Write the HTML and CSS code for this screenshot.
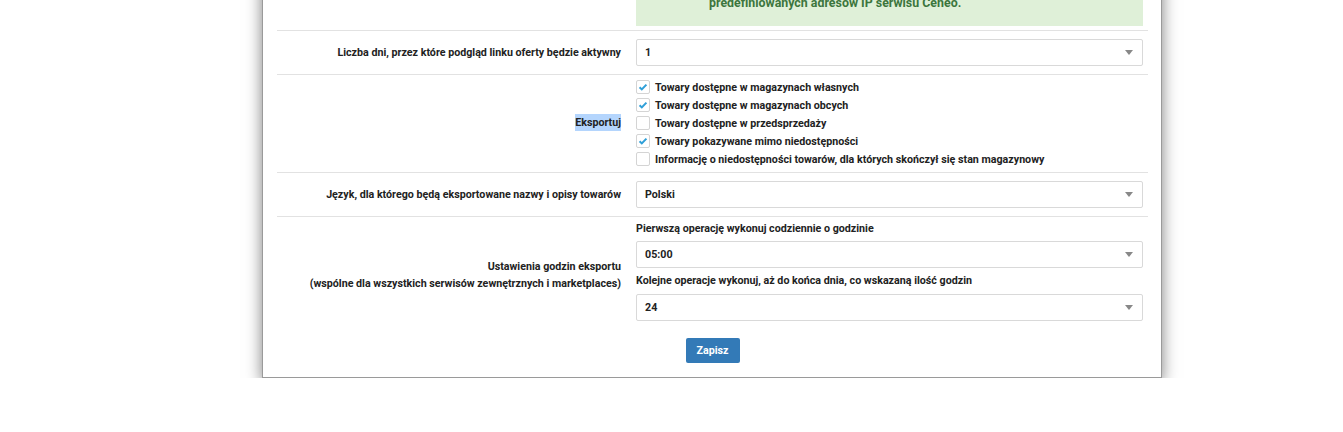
FILE: index.html
```html
<!DOCTYPE html>
<html lang="pl">
<head>
    <meta charset="UTF-8">
    <meta name="viewport" content="width=device-width, initial-scale=1.0">
    <title>Ustawienia eksportu</title>
    <link rel="stylesheet" href="styles.css">
</head>
<body>
    <div class="modal">
        <div class="form-row no-border">
            <div class="form-label"></div>
            <div class="form-control">
                <div class="alert">
                    Eksport jest dostępny wyłącznie dla zapytań wysyłanych z<br>
                    predefiniowanych adresów IP serwisu Ceneo.
                </div>
            </div>
        </div>

        <div class="form-row">
            <div class="form-label">Liczba dni, przez które podgląd linku oferty będzie aktywny</div>
            <div class="form-control">
                <div class="select"><span>1</span><i class="caret"></i></div>
            </div>
        </div>

        <div class="form-row checks-row">
            <div class="form-label"><span class="selected">Eksportuj</span></div>
            <div class="form-control">
                <label class="check"><span class="box checked"><svg viewBox="0 0 14 14" width="14" height="14"><path d="M3 7.2l2.6 2.6L11 4.2" fill="none" stroke="#2f9fd8" stroke-width="2.4"/></svg></span>Towary dostępne w magazynach własnych</label>
                <label class="check"><span class="box checked"><svg viewBox="0 0 14 14" width="14" height="14"><path d="M3 7.2l2.6 2.6L11 4.2" fill="none" stroke="#2f9fd8" stroke-width="2.4"/></svg></span>Towary dostępne w magazynach obcych</label>
                <label class="check"><span class="box"></span>Towary dostępne w przedsprzedaży</label>
                <label class="check"><span class="box checked"><svg viewBox="0 0 14 14" width="14" height="14"><path d="M3 7.2l2.6 2.6L11 4.2" fill="none" stroke="#2f9fd8" stroke-width="2.4"/></svg></span>Towary pokazywane mimo niedostępności</label>
                <label class="check"><span class="box"></span>Informację o niedostępności towarów, dla których skończył się stan magazynowy</label>
            </div>
        </div>

        <div class="form-row">
            <div class="form-label">Język, dla którego będą eksportowane nazwy i opisy towarów</div>
            <div class="form-control">
                <div class="select"><span>Polski</span><i class="caret"></i></div>
            </div>
        </div>

        <div class="form-row hours-row">
            <div class="form-label two-lines">Ustawienia godzin eksportu<br>(wspólne dla wszystkich serwisów zewnętrznych i marketplaces)</div>
            <div class="form-control">
                <div class="field-title first">Pierwszą operację wykonuj codziennie o godzinie</div>
                <div class="select"><span>05:00</span><i class="caret"></i></div>
                <div class="field-title">Kolejne operacje wykonuj, aż do końca dnia, co wskazaną ilość godzin</div>
                <div class="select"><span>24</span><i class="caret"></i></div>
            </div>
        </div>

        <div class="actions">
            <button class="btn-save">Zapisz</button>
        </div>
    </div>
</body>
</html>
```

FILE: styles.css
```css
body {
    margin: 0;
    background-color: #fff;
    font-family: 'Roboto', 'Liberation Sans', sans-serif;
    font-size: 10.7px;
    color: #222;
    overflow: hidden;
}

.modal {
    width: 900px;
    margin: -33px 0 0 262px;
    padding: 0 13px 0 14px;
    box-sizing: border-box;
    background-color: #fff;
    border: 1px solid #9a9a9a;
    box-shadow: 0 5px 15px rgba(0, 0, 0, 0.5);
}

.form-row {
    display: grid;
    grid-template-columns: 344px 1fr;
    column-gap: 15px;
    align-items: center;
    padding: 8px 5px 8px 0;
    border-top: 1px solid #e2e2e2;
}

.form-row.no-border {
    border-top: none;
    padding: 0 5px 4px 0;
}

.form-label {
    text-align: right;
    font-weight: bold;
    line-height: 16px;
}

.form-label .selected {
    background-color: #b4d5fd;
    padding: 2px 0;
}

.form-label.two-lines {
    line-height: 17px;
    padding-top: 7px;
}

.alert {
    background-color: #dff0d8;
    color: #3c763d;
    font-size: 12.4px;
    font-weight: bold;
    line-height: 19px;
    padding: 6px 10px 14px 73px;
}

.select {
    display: flex;
    align-items: center;
    justify-content: space-between;
    height: 27px;
    box-sizing: border-box;
    padding: 0 8px 0 8px;
    border: 1px solid #d9d9d9;
    border-radius: 2px;
    font-weight: bold;
    background-color: #fff;
}

.caret {
    width: 0;
    height: 0;
    border-left: 4px solid transparent;
    border-right: 4px solid transparent;
    border-top: 5px solid #888;
    margin-right: 1px;
}

.checks-row {
    padding: 3px 5px 4px 0;
}

.check {
    display: flex;
    align-items: center;
    gap: 5px;
    height: 18px;
    font-weight: bold;
}

.box {
    width: 14px;
    height: 14px;
    box-sizing: border-box;
    border: 1px solid #d4d4d4;
    border-radius: 2px;
    background-color: #fff;
    display: flex;
    align-items: center;
    justify-content: center;
}

.box svg {
    display: block;
}

.hours-row {
    padding: 4px 5px 0 0;
}

.field-title {
    font-weight: bold;
    line-height: 16px;
    margin: 5px 0 5px;
}

.field-title.first {
    margin: 0 0 4px;
}

.actions {
    display: flex;
    justify-content: center;
    padding: 17px 0 14px;
}

.btn-save {
    width: 54px;
    height: 25px;
    border: none;
    border-radius: 2px;
    background-color: #337ab7;
    color: #fff;
    font-family: 'Roboto', 'Liberation Sans', sans-serif;
    font-size: 10.7px;
    font-weight: bold;
    cursor: pointer;
}
```
